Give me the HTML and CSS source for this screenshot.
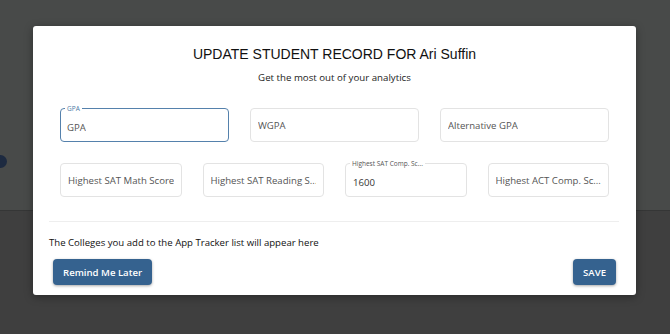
FILE: index.html
```html
<!DOCTYPE html>
<html>
<head>
<meta charset="utf-8">
<link rel="stylesheet" href="styles.css">
</head>
<body>
<div class="backdrop">
  <div class="bg-top"><span class="bg-dot"></span></div>
  <div class="bg-bottom"></div>
  <div class="modal">
    <h1 class="title">UPDATE STUDENT RECORD FOR Ari Suffin</h1>
    <p class="subtitle">Get the most out of your analytics</p>
    <div class="fields">
      <div class="row row3">
        <div class="field focused"><span class="label">GPA</span><span class="value ph">GPA</span></div>
        <div class="field"><span class="value ph">WGPA</span></div>
        <div class="field"><span class="value ph">Alternative GPA</span></div>
      </div>
      <div class="row row4">
        <div class="field"><span class="value ph">Highest SAT Math Score</span></div>
        <div class="field"><span class="value ph">Highest SAT Reading S...</span></div>
        <div class="field filled"><span class="label plain">Highest SAT Comp. Sc...</span><span class="value">1600</span></div>
        <div class="field"><span class="value ph">Highest ACT Comp. Sc...</span></div>
      </div>
    </div>
    <div class="divider"></div>
    <p class="note">The Colleges you add to the App Tracker list will appear here</p>
    <div class="actions">
      <button class="btn">Remind Me Later</button>
      <button class="btn">SAVE</button>
    </div>
  </div>
</div>
</body>
</html>
```
FILE: styles.css
```css
* { box-sizing: border-box; }
html, body { margin: 0; padding: 0; }
body { width: 670px; height: 334px; overflow: hidden; font-family: "Open Sans", sans-serif; }
.backdrop { position: relative; width: 670px; height: 334px; background: #3f3f3f; }
.bg-top { height: 211px; background: #484a49; border-bottom: 1px solid #353636; position: relative; }
.bg-dot { position: absolute; left: -6px; top: 155px; width: 13px; height: 13px; border-radius: 50%; background: #1d2a40; }
.modal {
  position: absolute; left: 33px; top: 26px; width: 603px; height: 269px;
  background: #fff; border-radius: 3px; box-shadow: 0 2px 8px rgba(0,0,0,0.35);
  padding: 18px 16px 0 16px;
}
.title { margin: 0; text-align: center; font-family: "Liberation Sans", Arial, sans-serif; font-weight: 400; font-size: 14px; line-height: 20px; color: #111; }
.subtitle { margin: 7px 0 0; text-align: center; font-size: 9.7px; line-height: 14px; color: #222; }
.fields { padding: 0 11px; margin-top: 23px; display: flex; flex-direction: column; gap: 21px; }
.row { display: grid; gap: 21px; }
.row3 { grid-template-columns: repeat(3, minmax(0, 1fr)); }
.row4 { grid-template-columns: repeat(4, minmax(0, 1fr)); }
.field { position: relative; height: 34px; border: 1px solid #e3e3e3; border-radius: 4px; display: flex; align-items: center; padding: 0 7px; min-width: 0; }
.field.focused { border: 1.5px solid #5581ac; padding-left: 6px; }
.value { font-size: 9.6px; color: #333; white-space: nowrap; overflow: hidden; }
.value.ph { color: #555; }
.field.focused .value, .field.filled .value { padding-top: 5px; }
.label { position: absolute; left: 4px; top: -5px; background: #fff; padding: 0 2px; font-size: 6.5px; line-height: 9px; color: #4e7aa5; white-space: nowrap; }
.label.plain { color: #555; }
.divider { height: 1px; background: #eeeeee; margin: 24px 1px 0 0; }
.note { margin: 14px 0 0; font-size: 9.6px; line-height: 14px; color: #111; }
.actions { display: flex; justify-content: space-between; padding: 0 4px; margin-top: 9px; }
.btn { font-family: "Open Sans", sans-serif; font-weight: 600; font-size: 9.6px; color: #fff; background: #35628f; border: none; border-radius: 4px; height: 26px; padding: 0 10px; box-shadow: 0 1px 3px rgba(0,0,0,0.35); }
```
